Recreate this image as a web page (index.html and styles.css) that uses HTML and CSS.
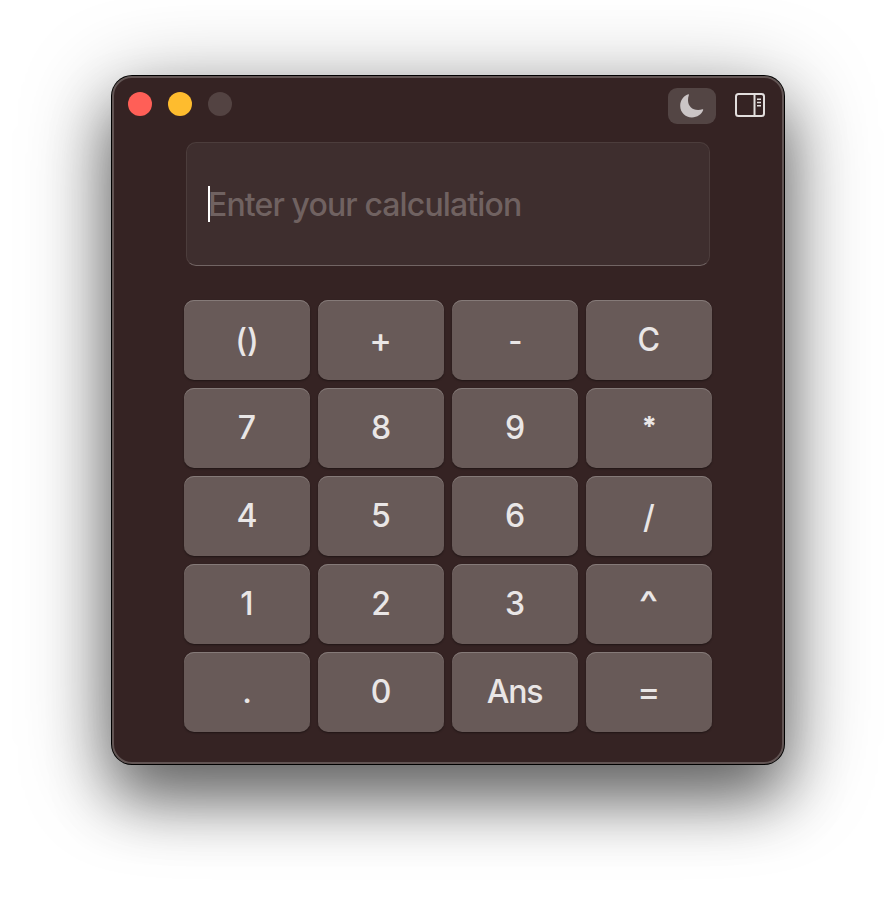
FILE: index.html
```html
<!DOCTYPE html>
<html lang="en">
<head>
<meta charset="utf-8">
<title>Calculator</title>
<link rel="stylesheet" href="styles.css">
</head>
<body>
<main class="window">
  <header class="titlebar">
    <div class="lights">
      <span class="light close"></span>
      <span class="light minimize"></span>
      <span class="light disabled"></span>
    </div>
    <div class="tools">
      <div class="theme">
        <svg width="24" height="24" viewBox="0 0 24 24"><path d="M8.300 .3C3.300 2.200 .2 6.400 .2 11.800C.2 18.500 5.200 23.400 11.900 23.400C17.200 23.400 21.700 20.400 23.200 16C23.400 15.300 23 15 22.400 15.200C21 15.700 19.700 15.900 18.100 15.900C12.100 15.900 8 12 8 6.200C8 4.300 8.300 2.600 8.900 1C9.100 .4 8.800 .1 8.300 .3Z" fill="#cbc5c6"/></svg>
      </div>
      <svg class="sidebar-icon" width="30" height="24" viewBox="0 0 30 24" fill="none" stroke="#e2dedd"><rect x="1" y="1" width="28" height="22" rx="2.500" stroke-width="2"/><path d="M19.500 1V23" stroke-width="2"/><path d="M22 6.300H26M22 9.500H26M22 12.700H26" stroke-width="1.500"/></svg>
    </div>
  </header>
  <section class="display"><span class="caret"></span><span class="placeholder">Enter your calculation</span></section>
  <section class="keys">
    <div class="key"><span class="parens">()</span></div><div class="key"><span class="plus">+</span></div><div class="key"><span class="minus">-</span></div><div class="key"><span class="clear">C</span></div>
    <div class="key"><span>7</span></div><div class="key"><span>8</span></div><div class="key"><span>9</span></div><div class="key"><span class="star">*</span></div>
    <div class="key"><span>4</span></div><div class="key"><span>5</span></div><div class="key"><span>6</span></div><div class="key"><span class="slash">/</span></div>
    <div class="key"><span>1</span></div><div class="key"><span>2</span></div><div class="key"><span>3</span></div><div class="key"><span class="power">^</span></div>
    <div class="key"><span>.</span></div><div class="key"><span>0</span></div><div class="key"><span class="ans">Ans</span></div><div class="key"><span class="equals">=</span></div>
  </section>
</main>
</body>
</html>
```
FILE: styles.css
```css
* { box-sizing: border-box; }
body {
  margin: 0;
  height: 912px;
  padding: 76px 112px;
  overflow: hidden;
  background: #fff;
  font-family: Inter, "Liberation Sans", sans-serif;
}
.window {
  width: 672px;
  height: 688px;
  border: 2px solid #625554;
  border-radius: 20px;
  background: #352323;
  box-shadow: 0 0 0 1px #000, 0 36px 60px rgba(0, 0, 0, .44), 0 16px 90px rgba(0, 0, 0, .4);
}
.titlebar {
  display: flex;
  justify-content: space-between;
  height: 64px;
  padding: 10px 17px 0 14px;
}
.lights { display: flex; gap: 16px; padding-top: 4px; }
.light { width: 24px; height: 24px; border-radius: 50%; }
.close { background: #ff5f57; }
.minimize { background: #febc2e; }
.disabled { background: #534342; }
.tools { display: flex; gap: 19px; }
.theme {
  display: flex;
  align-items: center;
  justify-content: center;
  width: 48px;
  height: 36px;
  padding-bottom: 1px;
  border-radius: 9px;
  background: #534544;
}
.sidebar-icon { margin-top: 5px; }
.display {
  display: flex;
  align-items: center;
  width: 524px;
  height: 124px;
  margin-left: 72px;
  padding: 0 21px 1px;
  border: 1px solid #4c3d3c;
  border-bottom-color: #726564;
  border-radius: 10px;
  background: #3e2e2e;
}
.caret { width: 2px; height: 36px; background: #fff; }
.placeholder {
  margin-left: -2px;
  padding-top: 2px;
  color: #706261;
  font-size: 32px;
  font-weight: 450;
  letter-spacing: -.88px;
  white-space: nowrap;
}
.keys {
  display: grid;
  grid-template-columns: repeat(4, 126px);
  grid-auto-rows: 80px;
  gap: 8px;
  margin: 34px 0 0 70px;
}
.key {
  display: flex;
  align-items: center;
  justify-content: center;
  padding-bottom: 1px;
  border-radius: 10px;
  background: #685a58;
  box-shadow: inset 0 1px 0 #857a78, 0 1px 2px rgba(0, 0, 0, .4);
  color: #e9e6e6;
  font-size: 32px;
  font-weight: 450;
}
.parens { transform: translateY(1px); }
.plus { transform: scale(1.06); }
.minus { transform: translateY(1px) scaleX(.96); }
.clear { transform: scaleX(.96); }
.star { font-weight: 800; transform: translateY(-1px) scale(.84); }
.slash { transform: translateY(1px); }
.power { transform: scaleX(1.28) translateY(-1px); }
.ans { letter-spacing: -1.2px; margin-right: 1px; }
.equals { transform: scaleX(1.08); }
```
